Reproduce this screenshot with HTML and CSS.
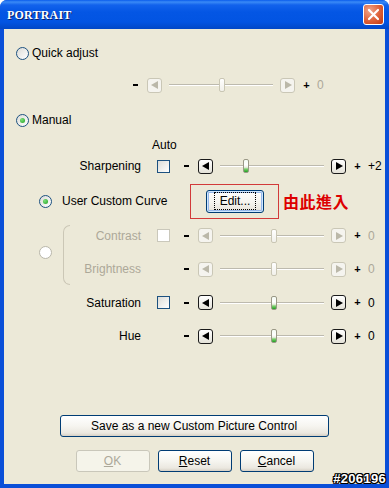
FILE: index.html
```html
<!DOCTYPE html>
<html>

<head>
  <title>PORTRAIT</title>
  <link rel="stylesheet" href="styles.css">
</head>

<body>
  <div class="window">
    <div class="titlebar">
      <span class="title">PORTRAIT</span>
      <span class="close">
        <svg width="13" height="13" viewBox="0 0 13 13">
          <path d="M2 2 L11 11 M11 2 L2 11" stroke="#fff" stroke-width="2.2" stroke-linecap="round" />
        </svg>
      </span>
    </div>

    <div class="content">
      <div class="option"><span class="radio"></span>Quick adjust</div>

      <div class="row quick">
        <div class="slider off">
          <span class="minus"></span>
          <span class="arrow left"></span>
          <span class="track"><span class="thumb" style="margin-left: 49px"></span></span>
          <span class="arrow right"></span>
          <span class="plus">+</span>
          <span class="value">0</span>
        </div>
      </div>

      <div class="option manual"><span class="radio checked"></span>Manual</div>

      <div class="auto">Auto</div>

      <div class="rows">
        <div class="row">
          <span class="label">Sharpening</span>
          <span class="check"></span>
          <div class="slider">
            <span class="minus"></span>
            <span class="arrow left"></span>
            <span class="track"><span class="thumb" style="margin-left: 22px"></span></span>
            <span class="arrow right"></span>
            <span class="plus">+</span>
            <span class="value">+2</span>
          </div>
        </div>

        <div class="row curve">
          <span class="radio checked"></span>
          <span class="curve_label">User Custom Curve</span>
          <div class="highlight">
            <button class="btn edit"><span class="focus">Edit...</span></button>
          </div>
          <span class="note">由此進入</span>
        </div>

        <div class="group">
          <span class="radio off"></span>
          <span class="bracket"></span>
          <div class="group_rows">
            <div class="row">
              <span class="label off">Contrast</span>
              <span class="check off"></span>
              <div class="slider off">
                <span class="minus"></span>
                <span class="arrow left"></span>
                <span class="track"><span class="thumb" style="margin-left: 50px"></span></span>
                <span class="arrow right"></span>
                <span class="plus">+</span>
                <span class="value">0</span>
              </div>
            </div>
            <div class="row tall">
              <span class="label off">Brightness</span>
              <span class="check none"></span>
              <div class="slider off">
                <span class="minus"></span>
                <span class="arrow left"></span>
                <span class="track"><span class="thumb" style="margin-left: 50px"></span></span>
                <span class="arrow right"></span>
                <span class="plus">+</span>
                <span class="value">0</span>
              </div>
            </div>
          </div>
        </div>

        <div class="row">
          <span class="label">Saturation</span>
          <span class="check"></span>
          <div class="slider">
            <span class="minus"></span>
            <span class="arrow left"></span>
            <span class="track"><span class="thumb" style="margin-left: 50px"></span></span>
            <span class="arrow right"></span>
            <span class="plus">+</span>
            <span class="value">0</span>
          </div>
        </div>

        <div class="row tall">
          <span class="label">Hue</span>
          <span class="check none"></span>
          <div class="slider">
            <span class="minus"></span>
            <span class="arrow left"></span>
            <span class="track"><span class="thumb" style="margin-left: 50px"></span></span>
            <span class="arrow right"></span>
            <span class="plus">+</span>
            <span class="value">0</span>
          </div>
        </div>
      </div>

      <div class="spacer"></div>

      <button class="btn save">Save as a new Custom Picture Control</button>

      <div class="buttons">
        <button class="btn off"><u>O</u>K</button>
        <button class="btn"><u>R</u>eset</button>
        <button class="btn"><u>C</u>ancel</button>
      </div>
    </div>

    <span class="stamp">#206196</span>
  </div>
</body>

</html>
```

FILE: styles.css
```css
* {
  box-sizing: border-box;
}

html,
body {
  margin: 0;
  padding: 0;
  background: #fff;
}

body {
  font: 12px/1 "Liberation Sans", Arial, sans-serif;
  color: #000;
}

.window {
  position: relative;
  width: 389px;
  height: 488px;
  display: flex;
  flex-direction: column;
  background: #0a4fd8;
  border-radius: 7px 7px 0 0;
  padding: 0 4px 4px;
  overflow: hidden;
}

.titlebar {
  height: 29px;
  margin: 0 -4px;
  padding: 0 5px 0 7px;
  display: flex;
  align-items: center;
  justify-content: space-between;
  background: linear-gradient(#0a5cec 0, #3a8af6 2px, #1262ec 5px, #0456e4 12px, #0254e2 22px, #0147c6 29px);
}

.title {
  font: bold 12px "Liberation Serif", serif;
  color: #fff;
  text-shadow: 1px 1px 0 #0a1f6a;
  letter-spacing: 0.2px;
  margin-top: 1px;
}

.close {
  width: 21px;
  height: 21px;
  border: 1px solid #fff;
  border-radius: 3px;
  background: radial-gradient(circle at 30% 30%, #f0a58a, #dd5f37 55%, #c1380f);
  display: flex;
  align-items: center;
  justify-content: center;
}

.content {
  flex: 1;
  display: flex;
  flex-direction: column;
  background: #ece9d8;
  padding: 14px 0 12px;
}

.option {
  display: flex;
  align-items: center;
  height: 20px;
  padding-left: 12px;
}

.option .radio {
  margin-right: 3px;
}

.manual {
  margin-top: 15px;
}

.radio {
  width: 13px;
  height: 13px;
  flex: none;
  border: 1px solid #1c5180;
  border-radius: 50%;
  background: linear-gradient(135deg, #dcdcd7, #fff);
  display: flex;
  align-items: center;
  justify-content: center;
}

.radio.checked::before {
  content: "";
  width: 5px;
  height: 5px;
  border-radius: 50%;
  background: radial-gradient(circle at 35% 35%, #7de07a, #21a121);
}

.radio.off {
  border-color: #b9b7aa;
  background: #fff;
}

.row {
  display: flex;
  align-items: center;
  height: 33px;
}

.row.tall {
  height: 34px;
}

.rows {
  margin-top: -3px;
}

.rows > .row:first-child {
  height: 34px;
}

.quick {
  height: 20px;
  margin-top: 12px;
  padding-left: 129px;
}

.auto {
  margin-top: 8px;
  height: 14px;
  line-height: 14px;
  padding-left: 148px;
}

.label {
  width: 153px;
  padding-right: 16px;
  text-align: right;
}

.label.off {
  color: #aca899;
}

.check {
  width: 13px;
  height: 13px;
  flex: none;
  border: 1px solid #1c5180;
  background: linear-gradient(135deg, #dcdcd7, #fff);
  margin-right: 14px;
}

.check.off {
  border-color: #cac8bb;
  background: #fff;
}

.check.none {
  visibility: hidden;
}

.slider {
  display: flex;
  align-items: center;
}

.minus {
  width: 5px;
  height: 2px;
  background: #000;
  margin-right: 9px;
}

.arrow {
  width: 15px;
  height: 15px;
  border: 1px solid #1a1a1a;
  border-radius: 3px;
  background: linear-gradient(#fff, #e4e2d8);
  display: flex;
  align-items: center;
  justify-content: center;
}

.arrow::before {
  content: "";
  border-top: 4.5px solid transparent;
  border-bottom: 4.5px solid transparent;
}

.arrow.left::before {
  border-right: 7px solid #000;
  margin-left: -1px;
}

.arrow.right::before {
  border-left: 7px solid #000;
  margin-left: 1px;
}

.track {
  width: 104px;
  height: 14px;
  margin: 0 7px;
  display: flex;
  background: linear-gradient(transparent 6px, #bdbaae 6px, #bdbaae 7px, #fff 7px, #fff 8px, transparent 8px);
  border-left: 1px solid transparent;
}

.thumb {
  width: 6px;
  height: 14px;
  border: 1px solid #9a9886;
  border-radius: 2px;
  background: linear-gradient(#f4fbf2, #fff 40%, #eef0e6 60%, #7fcf6f 75%, #21a121);
}

.plus {
  width: 7px;
  margin-left: 8px;
  font-weight: bold;
  font-size: 11px;
  text-align: center;
}

.value {
  margin-left: 7px;
}

.slider.off .arrow {
  border-color: #cac7b6;
  background: #f5f4ef;
}

.slider.off .arrow.left::before {
  border-right-color: #bbb8a9;
}

.slider.off .arrow.right::before {
  border-left-color: #bbb8a9;
}

.slider.off .thumb {
  border-color: #c9c6b4;
  background: linear-gradient(#fff, #f1f0ea);
}

.slider.off .value {
  color: #aca899;
}

.row.curve {
  height: 36px;
  padding-left: 35px;
}

.curve_label {
  width: 138px;
  padding-left: 10px;
}

.highlight {
  width: 89px;
  height: 35px;
  border: 1px solid #d23a3a;
  padding: 5px 0 0 15px;
}

.note {
  margin-left: 4px;
  color: #dd0000;
  font: bold 16px "Noto Sans CJK TC", sans-serif;
  letter-spacing: 0.5px;
}

.group {
  display: flex;
  align-items: center;
  padding-left: 35px;
}

.bracket {
  width: 7px;
  height: 60px;
  margin-left: 11px;
  border: 1px solid #cbc7b6;
  border-right: none;
  border-radius: 7px 0 0 7px;
  align-self: flex-start;
  margin-top: 6px;
}

.group_rows .label {
  width: 87px;
}

.btn {
  font: 12px/1 "Liberation Sans", Arial, sans-serif;
  color: #000;
  height: 22px;
  padding: 0;
  border: 1px solid #003c74;
  border-radius: 3px;
  background: linear-gradient(#fff, #f6f5f0 50%, #ebe8e0 85%, #d6d0c5);
}

.btn u {
  text-decoration: underline;
}

.btn.off {
  color: #aca899;
  border-color: #c9c7ba;
  background: #f5f4ea;
}

.edit {
  width: 58px;
  height: 23px;
  box-shadow: inset 0 0 0 1px #cee7ff, inset 0 0 0 2px #98b8ea;
  display: flex;
  align-items: center;
  justify-content: center;
}

.focus {
  outline: 1px dotted #000;
  padding: 2px 5px;
}

.spacer {
  flex: 1;
}

.save {
  align-self: center;
  width: 269px;
  margin-left: -1px;
}

.buttons {
  display: flex;
  justify-content: center;
  gap: 8px;
  margin-top: 13px;
}

.buttons .btn {
  width: 74px;
}

.stamp {
  position: absolute;
  right: 3px;
  bottom: 2px;
  font: bold 13px "Liberation Sans", Arial, sans-serif;
  letter-spacing: 0.3px;
  color: #fff;
  text-shadow: 1px 0 0 #000, -1px 0 0 #000, 0 1px 0 #000, 0 -1px 0 #000, 1px 1px 0 #000, -1px -1px 0 #000, 1px -1px 0 #000, -1px 1px 0 #000;
}
```
